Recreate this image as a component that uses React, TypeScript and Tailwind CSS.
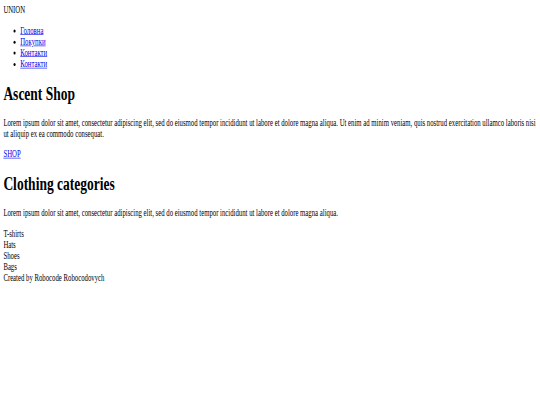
import React from "react";

export default function App() {
  const nav = ["Головна", "Покупки", "Контакти", "Контакти"];
  const cats = ["T-shirts", "Hats", "Shoes", "Bags"];
  return (
    <div className="w-[540px] h-[405px] overflow-hidden bg-white">
      <div className="w-[1280px] h-[675px] origin-top-left scale-x-[0.421875] scale-y-[0.6] p-2 font-['Liberation_Serif',serif] text-[16px] leading-[1.15] text-black">
        <header>
          <div>UNION</div>
          <ul className="list-disc pl-10 my-4">
            {nav.map((n, i) => (
              <li key={i}>
                <a href="#" className="text-[#0000ee] underline">
                  {n}
                </a>
              </li>
            ))}
          </ul>
        </header>
        <main>
          <section>
            <h1 className="text-[32px] font-bold my-[21.44px]">Ascent Shop</h1>
            <p className="my-4">
              Lorem ipsum dolor sit amet, consectetur adipiscing elit, sed do eiusmod tempor incididunt ut labore et dolore magna aliqua. Ut enim ad minim veniam, quis nostrud exercitation ullamco laboris nisi ut aliquip ex ea commodo consequat.
            </p>
            <p className="my-4">
              <a href="#" className="text-[#0000ee] underline">
                SHOP
              </a>
            </p>
          </section>
          <section>
            <h1 className="text-[32px] font-bold my-[21.44px]">Clothing categories</h1>
            <p className="my-4">
              Lorem ipsum dolor sit amet, consectetur adipiscing elit, sed do eiusmod tempor incididunt ut labore et dolore magna aliqua.
            </p>
            <div>
              {cats.map((c) => (
                <div key={c}>{c}</div>
              ))}
            </div>
          </section>
        </main>
        <footer>Created by Robocode Robocodovych</footer>
      </div>
    </div>
  );
}
